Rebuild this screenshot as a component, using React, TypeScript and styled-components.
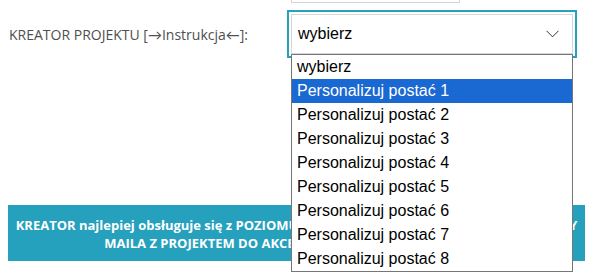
import { createGlobalStyle } from 'styled-components';
import styled from 'styled-components';

const GlobalStyles = createGlobalStyle`
  html, body {
    margin: 0;
    padding: 0;
    background: #fff;
  }
  body {
    overflow: hidden;
  }
`;

const options = [
  'wybierz',
  'Personalizuj postać 1',
  'Personalizuj postać 2',
  'Personalizuj postać 3',
  'Personalizuj postać 4',
  'Personalizuj postać 5',
  'Personalizuj postać 6',
  'Personalizuj postać 7',
  'Personalizuj postać 8',
];

const Page = styled.div`
  position: relative;
  width: 597px;
  height: 275px;
  padding: 0 8px;
  box-sizing: border-box;
`;

const TopField = styled.div`
  margin-left: 283px;
  width: 167px;
  height: 2px;
  border: 1px solid #d4d4d4;
  border-top: none;
  box-sizing: content-box;
`;

const FormRow = styled.div`
  display: flex;
  align-items: center;
  margin-top: 11px;
`;

const Label = styled.label`
  width: 283px;
  padding-left: 1px;
  box-sizing: border-box;
  font-family: 'Open Sans', 'Lato', sans-serif;
  font-size: 14px;
  font-weight: 500;
  color: #4f4f4f;
`;

const SelectBox = styled.div`
  display: flex;
  align-items: center;
  justify-content: space-between;
  width: 282px;
  height: 40px;
  padding: 0 13px 0 6px;
  box-sizing: border-box;
  border: 1px solid #d6d6d6;
  outline: 2px solid #25a0bd;
  outline-offset: 2px;
  font-family: 'Liberation Sans', Arial, sans-serif;
  font-size: 16px;
  color: #000;
`;

const Chevron = styled.svg`
  width: 13px;
  height: 8px;
  display: block;
`;

const OptionList = styled.ul`
  position: absolute;
  left: 291px;
  top: 54px;
  width: 282px;
  margin: 0;
  padding: 0;
  list-style: none;
  background: #fff;
  border: 1px solid #767676;
  box-sizing: border-box;
  font-family: 'Liberation Sans', Arial, sans-serif;
  font-size: 16px;
  z-index: 2;
`;

const OptionItem = styled.li<{ $active: boolean }>`
  height: 24px;
  line-height: 24px;
  padding-left: 5px;
  color: ${(p) => (p.$active ? '#fff' : '#000')};
  background: ${(p) => (p.$active ? '#1a68d2' : 'transparent')};
`;

const Banner = styled.div`
  margin-top: 151px;
  width: 577px;
  height: 56px;
  padding: 11px 0;
  box-sizing: border-box;
  background: #25a0bd;
  color: #fff;
  text-align: center;
  font-family: 'Open Sans', 'Lato', sans-serif;
  font-weight: 700;
  font-size: 13px;
  line-height: 18px;
  white-space: nowrap;
  overflow: hidden;
`;

export default function App() {
  return (
    <Page>
      <GlobalStyles />
      <TopField />
      <FormRow>
        <Label>KREATOR PROJEKTU [→Instrukcja←]:</Label>
        <SelectBox>
          <span>wybierz</span>
          <Chevron viewBox="0 0 13 8">
            <path d="M0.5 0.8 L6.5 6.8 L12.5 0.8" fill="none" stroke="#333" strokeWidth="1" />
          </Chevron>
        </SelectBox>
      </FormRow>
      <OptionList>
        {options.map((o, i) => (
          <OptionItem key={o} $active={i === 1}>
            {o}
          </OptionItem>
        ))}
      </OptionList>
      <Banner>
        KREATOR najlepiej obsługuje się z POZIOMU KOMPUTERA. PO ZAMÓWIENIU PRZEŚLEMY
        <br />
        MAILA Z PROJEKTEM DO AKCEPTACJI W CIĄGU 24-48 GODZIN
      </Banner>
    </Page>
  );
}
